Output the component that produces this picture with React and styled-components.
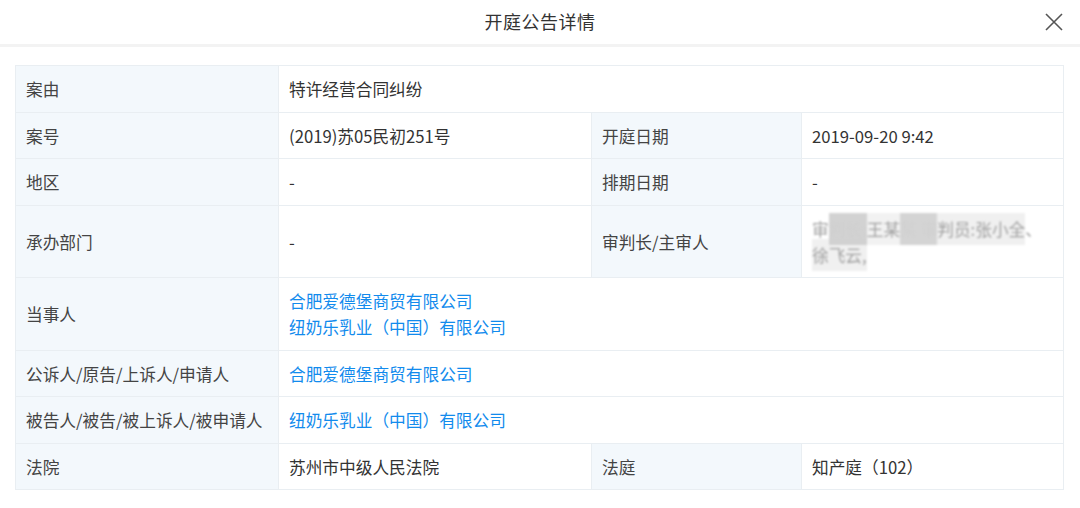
import React from "react";
import styled, { createGlobalStyle } from "styled-components";

const GlobalStyle = createGlobalStyle`
  html, body {
    margin: 0;
    padding: 0;
    background: #fff;
    font-family: "Noto Sans CJK SC", "Noto Sans", sans-serif;
  }
`;

const rows = [
  { cells: [{ label: "案由", value: "特许经营合同纠纷", span: 3 }] },
  {
    cells: [
      { label: "案号", value: "(2019)苏05民初251号" },
      { label: "开庭日期", value: "2019-09-20 9:42" }
    ]
  },
  {
    cells: [
      { label: "地区", value: "-" },
      { label: "排期日期", value: "-" }
    ]
  },
  {
    cells: [
      { label: "承办部门", value: "-" },
      { label: "审判长/主审人", blurred: true }
    ]
  },
  {
    cells: [
      {
        label: "当事人",
        links: ["合肥爱德堡商贸有限公司", "纽奶乐乳业（中国）有限公司"],
        span: 3
      }
    ]
  },
  {
    cells: [
      { label: "公诉人/原告/上诉人/申请人", links: ["合肥爱德堡商贸有限公司"], span: 3 }
    ]
  },
  {
    cells: [
      {
        label: "被告人/被告/被上诉人/被申请人",
        links: ["纽奶乐乳业（中国）有限公司"],
        span: 3
      }
    ]
  },
  {
    cells: [
      { label: "法院", value: "苏州市中级人民法院" },
      { label: "法庭", value: "知产庭（102）" }
    ]
  }
];

class App extends React.Component {
  renderValue = cell => {
    if (cell.blurred) {
      return (
        <Blurred>
          <BlurLine>
            审<Smudge shade={0.9}>判长:</Smudge>
            <Smudge shade={0.25}>王某</Smudge>
            <Smudge shade={0.85}>某 审</Smudge>
            <Smudge shade={0.3}>判员:张小全</Smudge>、
          </BlurLine>
          <BlurLine>
            <Smudge shade={0.3}>徐飞云,</Smudge>
          </BlurLine>
        </Blurred>
      );
    }
    if (cell.links) {
      return cell.links.map(name => <Link key={name}>{name}</Link>);
    }
    return cell.value;
  };

  render() {
    return (
      <Page>
        <GlobalStyle />
        <Header>
          <Title>开庭公告详情</Title>
          <Close aria-label="关闭">
            <svg width="18" height="18" viewBox="0 0 18 18">
              <path
                d="M1 1 L17 17 M17 1 L1 17"
                stroke="#555"
                strokeWidth="1.6"
                fill="none"
              />
            </svg>
          </Close>
        </Header>
        <Body>
          <Table>
            <colgroup>
              <col style={{ width: 263 }} />
              <col style={{ width: 313 }} />
              <col style={{ width: 210 }} />
              <col style={{ width: 262 }} />
            </colgroup>
            <tbody>
              {rows.map((row, i) => (
                <tr key={i}>
                  {row.cells.map(cell => (
                    <React.Fragment key={cell.label}>
                      <Label>{cell.label}</Label>
                      <Value colSpan={cell.span || 1}>
                        {this.renderValue(cell)}
                      </Value>
                    </React.Fragment>
                  ))}
                </tr>
              ))}
            </tbody>
          </Table>
        </Body>
      </Page>
    );
  }
}

const Page = styled.div`
  width: 1080px;
  height: 508px;
  background: #fff;
  overflow: hidden;
`;

const Header = styled.div`
  position: relative;
  height: 44px;
  display: flex;
  align-items: center;
  justify-content: center;
  border-bottom: 3px solid #f3f3f3;
`;

const Title = styled.div`
  font-size: 18px;
  color: #333;
  letter-spacing: 0.5px;
  margin-top: -2px;
`;

const Close = styled.div`
  position: absolute;
  right: 17px;
  top: 12px;
  width: 18px;
  height: 18px;
  cursor: pointer;
`;

const Body = styled.div`
  padding: 18px 17px 0 15px;
`;

const Table = styled.table`
  width: 1048px;
  border-collapse: collapse;
  table-layout: fixed;
  font-size: 16.7px;
  color: #333;
`;

const Label = styled.td`
  background: #f3f8fc;
  border: 1px solid #e9eef2;
  padding: 10px 8px 9.5px 10px;
  line-height: 26px;
  color: #444;
  white-space: nowrap;
`;

const Value = styled.td`
  border: 1px solid #e9eef2;
  padding: 10px 10px 9.5px 10px;
  line-height: 26px;
  color: #333;
  vertical-align: middle;
`;

const Link = styled.a`
  display: block;
  color: #128bed;
  text-decoration: none;
  cursor: pointer;
`;

const Blurred = styled.div`
  color: #a0a0a0;
  filter: blur(1.1px);
`;

const BlurLine = styled.div`
  white-space: nowrap;
`;

const Smudge = styled.span`
  background: rgba(205, 205, 205, ${p => p.shade});
  color: ${p => (p.shade > 0.8 ? "rgba(205,205,205,0.5)" : "inherit")};
  padding: 4px 0;
`;

export default App;
